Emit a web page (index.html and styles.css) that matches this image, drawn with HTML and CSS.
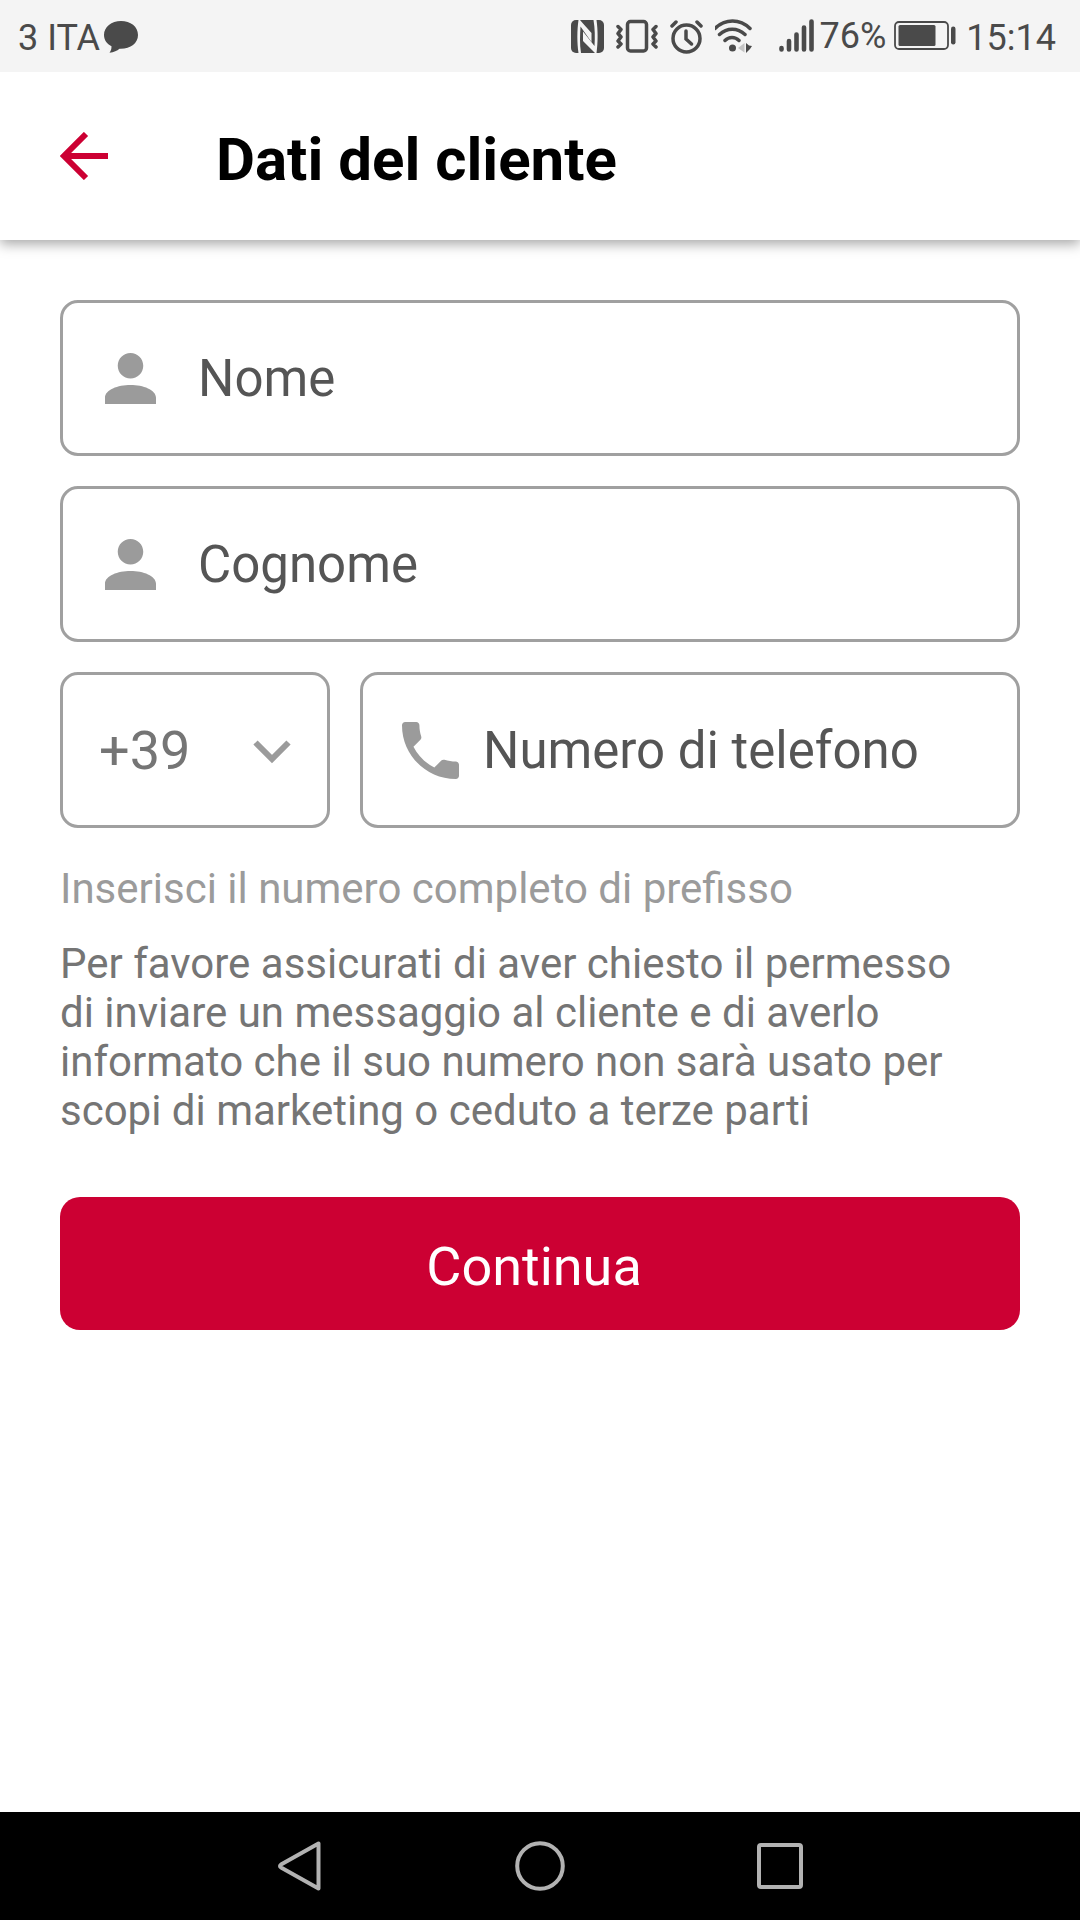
FILE: index.html
```html
<!DOCTYPE html>
<html lang="it">
<head>
<meta charset="utf-8">
<meta name="viewport" content="width=device-width, initial-scale=1">
<title>Dati del cliente</title>
<link rel="stylesheet" href="styles.css">
</head>
<body>
<div class="status-bar">
  <div class="status-group">
    <span class="status-text">3 ITA</span>
    <svg class="bubble" width="36" height="36" viewBox="0 0 36 36" aria-hidden="true"><path fill="#4a4a4a" d="M18 3C8.500 3 1 9 1 17c0 5 3 9 7.500 11.300C8.500 31 8 33 6.500 34.800c4.500-.5 7.500-2 10-4C27 31.300 35 25.500 35 17S27.500 3 18 3z"/></svg>
  </div>
  <div class="status-group">
    <div class="status-icons">
      <svg width="33" height="36" viewBox="0 0 33 36" aria-hidden="true"><rect x="0" y="2" width="33" height="33" rx="5" fill="#4a4a4a"/><path fill="#f4f4f4" d="M7.500 2C6 12 6 25 7.500 35H10C8.500 26 9 17 9.500 8.500L20.500 24V15L12 5.500 9 2z"/><path fill="#f4f4f4" d="M25.500 35C27 25 27 12 25.500 2H22.500C24 11 24 19 23.500 28L12 13.500V23L21.500 32.500 24 35z"/></svg>
      <svg width="42" height="36" viewBox="0 0 42 36" aria-hidden="true"><g fill="none" stroke="#4a4a4a" stroke-width="3.500" stroke-linejoin="round" stroke-linecap="round"><rect x="11.500" y="3.500" width="19" height="29.500" rx="3"/><path d="M2 8.500l3 3-3 4 3 3.500-3 4 3 3-3 3M40 8.500l-3 3 3 4-3 3.500 3 4-3 3 3 3"/></g></svg>
      <svg width="33" height="36" viewBox="0 0 33 36" aria-hidden="true"><g fill="none" stroke="#4a4a4a" stroke-width="3.500" stroke-linecap="round"><circle cx="16.500" cy="20.500" r="13.500"/><path d="M16 13v8l5.500 5M2 8l4-4M31 8l-4-4"/></g></svg>
      <svg width="40" height="36" viewBox="3 0 40 36" aria-hidden="true"><g fill="none" stroke="#4a4a4a" stroke-width="3.500" stroke-linecap="round"><path d="M3 10.500C13 .5 28 .5 38 10.500M7.500 16.500c7.500-7 18-7 25.500 0M13 22.500c4-4 10-4 14 0"/></g><circle cx="20.500" cy="30" r="3.500" fill="#4a4a4a"/><path fill="#c4c4c4" d="M32.500 25v9.500L26 30z"/><path fill="#4a4a4a" d="M34 25v10l4-4 2-3-3-.5z"/></svg>
    </div>
    <svg class="signal" width="36" height="36" viewBox="0 0 36 36" aria-hidden="true"><path fill="none" stroke="#4a4a4a" stroke-width="4.600" stroke-linecap="round" d="M3.500 30v1.500M11 23v8.500M18.500 16.500v15M26 9.500v22M33.500 3.500v28"/></svg>
    <span class="status-text battery-level">76%</span>
    <svg class="battery" width="62" height="36" viewBox="0 0 62 36" aria-hidden="true"><rect x="1" y="4" width="53" height="27" rx="4" fill="none" stroke="#4a4a4a" stroke-width="1.800"/><rect x="4.500" y="7" width="37" height="21" rx="1.500" fill="#4a4a4a"/><rect x="57" y="8.500" width="4.500" height="18" rx="2.200" fill="#4a4a4a"/></svg>
    <span class="status-text">15:14</span>
  </div>
</div>
<header class="app-bar">
  <button class="back" type="button" aria-label="Indietro">
    <svg width="48" height="48" viewBox="0 0 48 48" aria-hidden="true"><path fill="none" stroke="#cc0033" stroke-width="6" d="M26 2L4 24l22 22M4 24h44"/></svg>
  </button>
  <h1 class="title">Dati del cliente</h1>
</header>
<main class="content">
  <form class="form">
    <label class="field">
      <svg class="person" width="51" height="51" viewBox="4 4 16 16" aria-hidden="true"><path fill="#9b9b9b" d="M12 12c2.210 0 4-1.790 4-4s-1.790-4-4-4-4 1.790-4 4 1.790 4 4 4zm0 2c-4 0-8 1.500-8 4v2h16v-2c0-2.500-4-4-8-4z"/></svg>
      <input class="input" type="text" placeholder="Nome" aria-label="Nome">
    </label>
    <label class="field">
      <svg class="person" width="51" height="51" viewBox="4 4 16 16" aria-hidden="true"><path fill="#9b9b9b" d="M12 12c2.210 0 4-1.790 4-4s-1.790-4-4-4-4 1.790-4 4 1.790 4 4 4zm0 2c-4 0-8 1.500-8 4v2h16v-2c0-2.500-4-4-8-4z"/></svg>
      <input class="input" type="text" placeholder="Cognome" aria-label="Cognome">
    </label>
    <div class="phone-row">
      <label class="field prefix">
        <select class="prefix-select" aria-label="Prefisso"><option>+39</option></select>
        <svg class="chevron" width="38" height="24" viewBox="0 0 38 24" aria-hidden="true"><path fill="none" stroke="#9b9b9b" stroke-width="6" d="M2.500 2.500L19 19 35.500 2.500"/></svg>
      </label>
      <label class="field phone">
        <svg width="57" height="57" viewBox="3 3 18 18" aria-hidden="true"><path fill="#9b9b9b" d="M6.620 10.790c1.440 2.830 3.760 5.140 6.590 6.590l2.200-2.200c.27-.27.67-.36 1.020-.24 1.120.37 2.330.57 3.570.57.55 0 1 .45 1 1V20c0 .55-.45 1-1 1-9.390 0-17-7.610-17-17 0-.55.45-1 1-1h3.500c.55 0 1 .45 1 1 0 1.250.2 2.450.57 3.570.11.35.03.74-.25 1.020l-2.200 2.200z"/></svg>
        <input class="input" type="tel" placeholder="Numero di telefono" aria-label="Numero di telefono">
      </label>
    </div>
    <p class="hint">Inserisci il numero completo di prefisso</p>
    <p class="notice">Per favore assicurati di aver chiesto il permesso di inviare un messaggio al cliente e di averlo informato che il suo numero non sarà usato per scopi di marketing o ceduto a terze parti</p>
    <button class="submit" type="button">Continua</button>
  </form>
</main>
<nav class="nav-bar">
  <button class="nav-button" type="button" aria-label="Indietro"><svg width="50" height="50" viewBox="0 0 50 50" aria-hidden="true"><path fill="none" stroke="#b2b2b2" stroke-width="4" stroke-linejoin="round" d="M43.500 2.500v45L6 26.500Q4 25 6 23.500z"/></svg></button>
  <button class="nav-button" type="button" aria-label="Home"><svg width="50" height="50" viewBox="0 0 50 50" aria-hidden="true"><circle cx="25" cy="25" r="22.800" fill="none" stroke="#b2b2b2" stroke-width="4"/></svg></button>
  <button class="nav-button" type="button" aria-label="Recenti"><svg width="50" height="50" viewBox="0 0 50 50" aria-hidden="true"><rect x="4" y="4" width="42" height="42" rx="2" fill="none" stroke="#b2b2b2" stroke-width="4"/></svg></button>
</nav>
</body>
</html>
```

FILE: styles.css
```css
* {
  box-sizing: border-box;
}

body {
  margin: 0;
  min-height: 100vh;
  display: flex;
  flex-direction: column;
  background: #fff;
  font-family: Roboto, "Liberation Sans", sans-serif;
}

svg {
  display: block;
  flex: none;
}

button {
  border: 0;
  padding: 0;
  background: none;
  font-family: inherit;
  cursor: pointer;
}

.status-bar {
  position: relative;
  z-index: 1;
  display: flex;
  justify-content: space-between;
  height: 72px;
  padding: 0 24px 0 18px;
  background: #f4f4f4;
  color: #4a4a4a;
}

.status-group,
.status-icons {
  display: flex;
  align-items: center;
}

.status-icons {
  gap: 12px;
}

.status-text {
  padding-top: 3px;
  font-size: 36px;
  line-height: 42px;
}

.battery-level {
  padding: 0 8px 0 6px;
}

.bubble {
  margin-left: 3px;
}

.signal {
  margin-left: 23px;
}

.battery {
  margin-right: 10px;
}

.app-bar {
  display: flex;
  align-items: center;
  gap: 108px;
  height: 168px;
  padding: 0 60px;
  background: #fff;
  box-shadow: 0 4px 12px rgba(0, 0, 0, 0.35);
}

.title {
  margin: 0;
  padding-top: 8px;
  color: #000;
  font-size: 60px;
  font-weight: 700;
  line-height: 72px;
}

.content {
  flex: 1;
  padding: 60px;
}

.form {
  display: flex;
  flex-direction: column;
}

.field {
  display: flex;
  align-items: center;
  height: 156px;
  margin-bottom: 30px;
  padding: 0 42px;
  border: 3px solid #a0a0a0;
  border-radius: 18px;
}

.person {
  margin-right: 42px;
}

.input {
  flex: 1;
  min-width: 0;
  padding: 2px 0 0;
  border: 0;
  outline: 0;
  background: none;
  color: #555;
  font: 51px/60px Roboto, "Liberation Sans", sans-serif;
}

.input::placeholder {
  color: #555;
  opacity: 1;
}

.phone-row {
  display: grid;
  grid-template-columns: 270px minmax(0, 1fr);
  gap: 30px;
}

.phone-row .field {
  margin-bottom: 0;
}

.phone {
  gap: 24px;
  padding: 0 39px;
}

.prefix {
  position: relative;
  padding: 0;
}

.prefix-select {
  width: 100%;
  height: 100%;
  padding: 2px 36px 0;
  border: 0;
  outline: 0;
  appearance: none;
  background: none;
  color: #757575;
  font: 54px/64px Roboto, "Liberation Sans", sans-serif;
}

.chevron {
  position: absolute;
  top: 65px;
  right: 36px;
  pointer-events: none;
}

.hint,
.notice {
  margin: 0;
  font-size: 42px;
  line-height: 49px;
}

.hint {
  padding: 36px 0 26px;
  color: #9b9b9b;
}

.notice {
  padding-right: 60px;
  color: #757575;
}

.submit {
  height: 133px;
  margin-top: 62px;
  padding: 6px 12px 0 0;
  border-radius: 20px;
  background: #cc0033;
  color: #fff;
  font-size: 54px;
  line-height: 64px;
}

.nav-bar {
  display: grid;
  grid-template-columns: repeat(3, 240px);
  justify-content: center;
  height: 108px;
  background: #000;
}

.nav-button {
  display: flex;
  align-items: center;
  justify-content: center;
}
```
